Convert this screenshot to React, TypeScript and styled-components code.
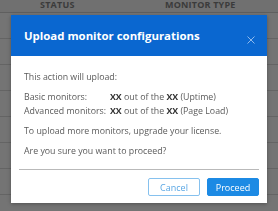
import React from "react";
import styled, { createGlobalStyle } from "styled-components";

const GlobalStyle = createGlobalStyle`
  html, body {
    margin: 0;
    padding: 0;
    background: #ffffff;
    font-family: "Open Sans", "Liberation Sans", sans-serif;
  }
`;

const Page = styled.div`
  width: 278px;
  height: 211px;
  overflow: hidden;
  background: #ffffff;
`;

const TableHead = styled.div`
  display: grid;
  grid-template-columns: 40px 125px 1fr;
  height: 12px;
  border-bottom: 1px solid #c8c8c8;
  background: #f4f4f4;
`;

const HeadCell = styled.div`
  font-size: 9px;
  font-weight: 700;
  line-height: 9px;
  color: #6a6a6a;
  letter-spacing: 0.2px;
`;

const TableRow = styled.div`
  height: 25px;
  border-bottom: 1px solid #d6d6d6;
`;

const Overlay = styled.div`
  position: fixed;
  inset: 0;
  background: rgba(30, 30, 30, 0.62);
  display: flex;
  justify-content: center;
  align-items: flex-start;
  padding-top: 15px;
`;

const Dialog = styled.div`
  width: 256px;
  background: #ffffff;
  box-shadow: 0 1px 4px rgba(0, 0, 0, 0.3);
  display: flex;
  flex-direction: column;
`;

const Header = styled.div`
  height: 41px;
  background: #0a67d0;
  display: flex;
  align-items: center;
  justify-content: space-between;
  padding: 0 12px 0 13px;
  box-sizing: border-box;
`;

const Title = styled.h2`
  margin: 0;
  font-size: 11.4px;
  font-weight: 700;
  color: #ffffff;
  padding-bottom: 1px;
`;

const CloseButton = styled.button`
  border: none;
  background: none;
  padding: 0;
  margin-top: 9px;
  width: 8px;
  height: 8px;
  display: flex;
`;

const Body = styled.div`
  padding: 14px 13px 0;
  display: flex;
  flex-direction: column;
  gap: 6px;
  font-size: 8.8px;
  line-height: 14px;
  color: #5a5a5a;
`;

const Para = styled.p`
  margin: 0;
`;

const Counts = styled.div`
  display: grid;
  grid-template-columns: 86px 1fr;
  white-space: nowrap;
`;

const Strong = styled.b`
  font-weight: 700;
  color: #333333;
`;

const Footer = styled.div`
  margin: 11px 8px 0;
  border-top: 1px solid #b9b9b9;
  padding: 8px 0 7px;
  display: flex;
  justify-content: flex-end;
  gap: 7px;
`;

const Button = styled.button<{ $primary?: boolean }>`
  width: 52px;
  height: 18px;
  box-sizing: border-box;
  border-radius: 2px;
  font-family: inherit;
  font-size: 9px;
  padding: 0;
  border: 1px solid ${(p) => (p.$primary ? "#1c8ae4" : "#86c1ee")};
  background: ${(p) => (p.$primary ? "#1c8ae4" : "#ffffff")};
  color: ${(p) => (p.$primary ? "#ffffff" : "#5aa7e4")};
`;

const CloseIcon = () => (
  <svg width="8" height="8" viewBox="0 0 8 8">
    <path d="M0.5 0.5 L7.5 7.5 M7.5 0.5 L0.5 7.5" stroke="#9dc3ef" strokeWidth="0.9" />
  </svg>
);

export default function App() {
  return (
    <Page>
      <GlobalStyle />
      <TableHead>
        <div />
        <HeadCell>STATUS</HeadCell>
        <HeadCell>MONITOR TYPE</HeadCell>
      </TableHead>
      <TableRow />
      <TableRow />
      <TableRow />
      <TableRow />
      <TableRow />
      <TableRow />
      <TableRow />
      <Overlay>
        <Dialog>
          <Header>
            <Title>Upload monitor configurations</Title>
            <CloseButton aria-label="Close">
              <CloseIcon />
            </CloseButton>
          </Header>
          <Body>
            <Para>This action will upload:</Para>
            <Counts>
              <span>Basic monitors:</span>
              <span>
                <Strong>XX</Strong> out of the <Strong>XX</Strong> (Uptime)
              </span>
              <span>Advanced monitors:</span>
              <span>
                <Strong>XX</Strong> out of the <Strong>XX</Strong> (Page Load)
              </span>
            </Counts>
            <Para>To upload more monitors, upgrade your license.</Para>
            <Para>Are you sure you want to proceed?</Para>
          </Body>
          <Footer>
            <Button>Cancel</Button>
            <Button $primary>Proceed</Button>
          </Footer>
        </Dialog>
      </Overlay>
    </Page>
  );
}
